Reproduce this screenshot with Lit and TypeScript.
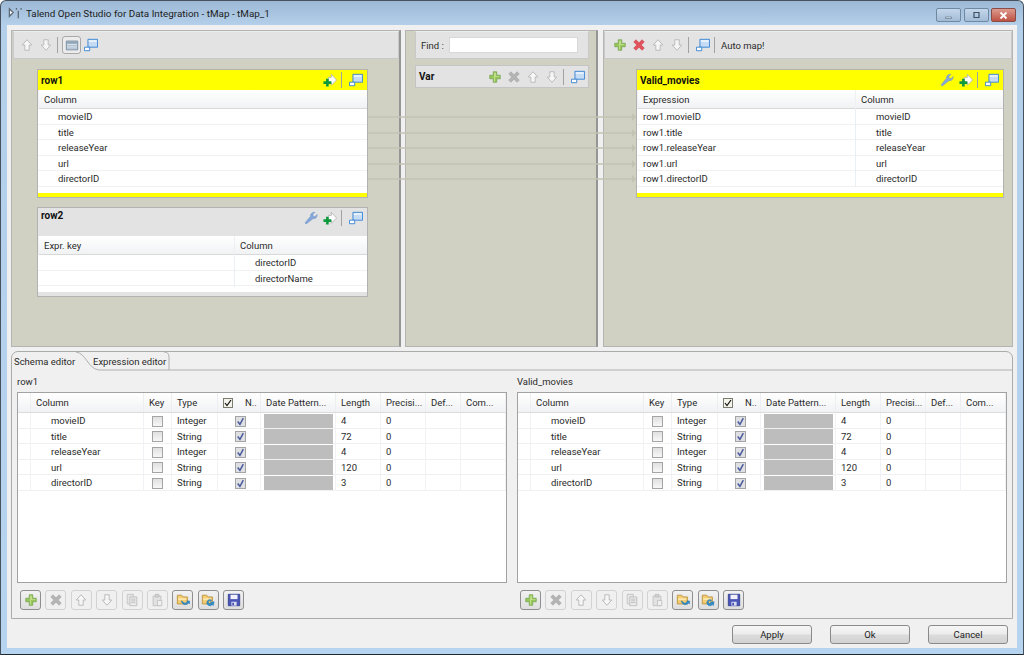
import { LitElement, css, html, svg } from 'lit';
import { customElement } from 'lit/decorators.js';

const ICONS: Record<string, unknown> = {
  plus: svg`<path d="M6 2h4v4h4v4h-4v4H6v-4H2V6h4z" fill="#98c85a" stroke="#6f9f4a" stroke-width=".8"/><path d="M7 3h2v4h4v1H8v5H7z" fill="#c3e08e"/>`,
  delOff: svg`<path d="M4.500 2 8 5.500 11.500 2 14 4.500 10.500 8l3.500 3.500-2.500 2.500L8 10.500 4.500 14 2 11.500 5.500 8 2 4.500z" fill="#b4b4b4" stroke="#a4a4a4" stroke-width=".7"/>`,
  del: svg`<path d="M4.500 2 8 5.500 11.500 2 14 4.500 10.500 8l3.500 3.500-2.500 2.500L8 10.500 4.500 14 2 11.500 5.500 8 2 4.500z" fill="#e2525c" stroke="#c8404a" stroke-width=".7"/>`,
  up: svg`<path d="M8 2l5.500 6H10.500v6h-5V8H2.500z" fill="#f6f6f6" stroke="#b9b9b9" stroke-width="1.100"/>`,
  down: svg`<path d="M8 14l5.500-6H10.500V2h-5v6H2.500z" fill="#f6f6f6" stroke="#b9b9b9" stroke-width="1.100"/>`,
  mon: svg`<path d="M4.500 1.500h11v9h-11z" fill="#c5dcf4" stroke="#2f7fd2"/><path d="M5.500 2.500h9v2h-9z" fill="#eaf3fc"/><path d="M.5 10.500h6v4h-6z" fill="#fff" stroke="#2f7fd2"/>`,
  table: svg`<path d="M1.500 3.500h13v10h-13z" fill="#e4ecf5" stroke="#6a7f94"/><path d="M2 6.500h12M2 9h12M2 11.500h12" stroke="#8fa3b6"/><path d="M2 4h12v2H2z" fill="#8fa3b6"/>`,
  add: svg`<path d="M6 5h3.500V1.500L15.500 8l-6 6v-3.500H6z" fill="#fff" stroke="#b4b4b4"/><path d="M3.500 6.500h3v3h3v3h-3v3h-3v-3H.5v-3h3z" fill="#0c9a3c"/>`,
  wrench: svg`<path d="M3 14.500c-1 .5-2-.6-1.500-1.500l6-7C7 3.500 9.500 1 12.500 1.500L10 4l.5 2 2 .5L15 4c.4 3-2 5.500-4.500 4.500z" fill="#86a7da" stroke="#7294c6" stroke-width=".6"/>`,
  copy: svg`<path d="M2.500 1.500h7v11h-7z" fill="#e6e6e6" stroke="#c2c2c2"/><path d="M5.500 4.500h8v10h-8z" fill="#ececec" stroke="#bcbcbc"/><path d="M7 7h5M7 9h5M7 11h5" stroke="#bcbcbc"/>`,
  paste: svg`<path d="M3.500 3.500h9v11h-9z" fill="#e2e2e2" stroke="#c0c0c0"/><path d="M6 1.500h4v3H6z" fill="#d4d4d4" stroke="#bcbcbc"/><path d="M8.500 8.500h5v6h-5z" fill="#f0f0f0" stroke="#c0c0c0"/>`,
  foldIn: svg`<path d="M1.500 2.500h5l1.500 2h5v8h-11.500z" fill="#f4cd72" stroke="#b8913e"/><path d="M2.500 6h9v2h-9z" fill="#fbe6ad"/><path d="M7 9c2 3 4 3 6 1l-1-1h3.500v3.500l-1-1c-3 3-7 2.500-8.500-2.500z" fill="#2f8fcf" stroke="#1f6c9f" stroke-width=".5"/>`,
  foldOut: svg`<path d="M1.500 2.500h5l1.500 2h5v8h-11.500z" fill="#f4cd72" stroke="#b8913e"/><path d="M2.500 6h9v2h-9z" fill="#fbe6ad"/><path d="M12 8a3.500 3.500 0 1 0 1 5l1 1.500 1-4.500-4.500.5 1 1c-1 1-3 .8-3-1 0-1.500 2-2 3-1z" fill="#2f8fcf" stroke="#1f6c9f" stroke-width=".5"/>`,
  save: svg`<path d="M1.500 1.500h13v13h-13z" fill="#4a55b8" stroke="#34408f"/><path d="M4 2h8v5H4z" fill="#f2f2f8"/><path d="M5 10h6v4.500H5z" fill="#d8dcef"/><path d="M6 11h2v3H6z" fill="#4a55b8"/>`,
  talend: svg`<path d="M1.500 3l4 4-4 4zM9 2v2M11 5v8M14 2v2" stroke="#5d6b78" stroke-width="1.400" fill="#fff"/>`,
};

const icon = (name: string) =>
  html`<svg class="ico" viewBox="0 0 16 16">${ICONS[name]}</svg>`;

const SCHEMA = [
  ['movieID', 'Integer', '4'],
  ['title', 'String', '72'],
  ['releaseYear', 'Integer', '4'],
  ['url', 'String', '120'],
  ['directorID', 'String', '3'],
];

const LINK_YS = [87, 103, 118, 134, 149];

@customElement('app-root')
export class AppRoot extends LitElement {
  static styles = css`
    :host {
      display: block;
      width: 1024px;
      height: 655px;
      overflow: hidden;
      background: #fff;
      font-family: Roboto, 'Noto Sans', sans-serif;
      font-size: 9.500px;
      color: #2a2a2a;
    }
    .window {
      box-sizing: border-box;
      height: 655px;
      display: flex;
      flex-direction: column;
      padding: 0 6px 6px;
      border: 1px solid #46535e;
      border-bottom-color: #1f2a30;
      border-radius: 6px 6px 0 0;
      background: linear-gradient(#9db8d4 0, #b3cfea 24px, #b6d3f0 100%);
    }
    .titlebar {
      height: 24px;
      flex: none;
      display: flex;
      align-items: center;
      font-size: 9.900px;
      color: #1c1c1c;
    }
    .titlebar .ico {
      width: 15px;
      height: 15px;
      margin: 0 3px 0 1px;
    }
    .title {
      flex: 1;
    }
    .wincontrols {
      display: flex;
      gap: 2.500px;
      align-self: flex-start;
      margin: 7px 1px 0 0;
    }
    .wbtn {
      box-sizing: border-box;
      width: 25px;
      height: 14px;
      border: 1px solid #7089a3;
      border-radius: 2px;
      background: linear-gradient(#c4d7eb, #a3bcd6);
      display: flex;
      align-items: center;
      justify-content: center;
    }
    .wbtn.close {
      background: linear-gradient(#dc9a8e, #bd5344);
      border-color: #8a4c45;
    }
    .wbtn svg {
      width: 11px;
      height: 9px;
    }
    .body {
      flex: 1;
      display: flex;
      flex-direction: column;
      padding: 5px 4px 0;
      background: #f0f0f0;
    }
    .map {
      position: relative;
      height: 317px;
      flex: none;
      display: flex;
    }
    .links {
      position: absolute;
      left: 0;
      top: 0;
      width: 1002px;
      height: 317px;
      pointer-events: none;
    }
    .pane {
      box-sizing: border-box;
      height: 317px;
      border: 1px solid #b4b4b4;
      background: #d1d1c3;
    }
    .pane.left {
      width: 390px;
      margin-right: 4px;
      padding-left: 1px;
      border-right: 2px solid #959595;
    }
    .pane.mid {
      width: 193px;
      margin-right: 5px;
      padding-left: 9px;
      border-right: 2px solid #959595;
    }
    .pane.right {
      width: 410px;
    }
    .toolbar {
      box-sizing: border-box;
      height: 28px;
      display: flex;
      align-items: center;
      background: #e3e3e3;
      border: 1px solid #c9c9c9;
      border-top-color: #ececec;
    }
    .left .toolbar {
      padding-left: 3px;
    }
    .right .toolbar {
      padding-left: 5px;
    }
    .ico {
      width: 14px;
      height: 14px;
      display: block;
    }
    .tool {
      width: 19px;
      height: 16px;
      flex: none;
      display: flex;
      align-items: center;
      justify-content: center;
    }
    .tool.on {
      box-sizing: border-box;
      height: 18px;
      border: 1px solid #a9a9a9;
      border-radius: 3px;
      background: #ececec;
    }
    .sep {
      width: 1px;
      height: 16px;
      flex: none;
      margin: 0 4px 0 2px;
      background: #a2a2a2;
    }
    .automap {
      margin-left: 2px;
    }
    .find {
      box-sizing: border-box;
      width: 174px;
      gap: 5px;
      padding-left: 5px;
    }
    .find input {
      box-sizing: border-box;
      width: 129px;
      height: 16px;
      border: 1px solid #d8d8d8;
      background: #fff;
    }
    .var {
      box-sizing: border-box;
      width: 174px;
      height: 23px;
      margin-top: 6px;
      display: flex;
      align-items: center;
      padding: 0 1px 0 3px;
      background: #e3e3e3;
      border: 1px solid #c4c4c4;
    }
    .var .name,
    .card .name {
      flex: 1;
      font-size: 10px;
      font-weight: 700;
      color: #111;
    }
    .card {
      border: 1px solid #b2b2b2;
      background: #fff;
    }
    .left .card {
      width: 329px;
      margin-left: 24px;
    }
    .right .card {
      width: 366px;
      margin-left: 32px;
    }
    .card.first {
      margin-top: 10px;
    }
    .card.second {
      margin-top: 9px;
    }
    .head {
      height: 20px;
      display: flex;
      align-items: center;
      padding: 0 2px 0 3px;
      background: #ffff00;
    }
    .second .head {
      height: 28px;
      align-items: flex-start;
      padding-top: 2px;
      box-sizing: border-box;
      background: #e3e3e3;
    }
    .grid-one,
    .grid-expr,
    .grid-key {
      display: grid;
    }
    .grid-one {
      grid-template-columns: 1fr;
    }
    .grid-expr {
      grid-template-columns: 218px 1fr;
    }
    .grid-key {
      grid-template-columns: 196px 1fr;
    }
    .th {
      height: 19px;
      box-sizing: border-box;
      align-items: center;
      background: linear-gradient(#fff, #f1f2f4);
      border-bottom: 1px solid #d9d9d9;
    }
    .th > div {
      padding: 1px 0 0 5px;
      line-height: 18px;
      border-left: 1px solid #eef0f3;
    }
    .tr {
      height: 15.500px;
      box-sizing: border-box;
      border-bottom: 1px solid #f1f1f1;
      line-height: 16px;
    }
    .tr > div {
      padding-left: 6px;
      min-width: 0;
    }
    .tr > .val {
      padding-left: 20px;
      border-left: 1px solid #eaeff6;
    }
    .grid-one .val {
      border-left: 0;
    }
    .foot {
      height: 4px;
      margin-top: 6.500px;
      background: #ffff00;
    }
    .second .foot {
      margin-top: 6px;
      background: #e3e3e3;
    }
    .folder {
      box-sizing: border-box;
      height: 268px;
      flex: none;
      margin-top: 4px;
      display: flex;
      flex-direction: column;
      border: 1px solid #ababab;
      border-radius: 7px 7px 0 0;
    }
    .tabs {
      position: relative;
      height: 19px;
      flex: none;
      display: flex;
      align-items: center;
      padding-left: 2px;
    }
    .tabs svg {
      position: absolute;
      left: 0;
      top: 0;
      width: 1000px;
      height: 19px;
    }
    .tab {
      position: relative;
      width: 79px;
      white-space: nowrap;
    }
    .editors {
      flex: 1;
      display: flex;
      gap: 10px;
      padding: 3px 5px 0;
    }
    .editor {
      width: 490px;
    }
    .label {
      height: 18px;
      line-height: 16px;
    }
    .schema {
      box-sizing: border-box;
      height: 191px;
      border: 1px solid #a2a2a2;
      background: #fff;
    }
    .cols {
      display: grid;
      grid-template-columns: 13px 113px 28px 46px 43px 75px 45px 45px 35px 45px;
    }
    .cols.hd {
      height: 20px;
      box-sizing: border-box;
      background: linear-gradient(#fff, #f1f2f4);
      border-bottom: 1px solid #dcdcdc;
      line-height: 21px;
    }
    .cols.hd > div {
      padding-left: 5px;
      border-right: 1px solid #eceef1;
      white-space: nowrap;
      overflow: hidden;
      display: flex;
      align-items: center;
      gap: 12px;
    }
    .cols.rw {
      height: 15.500px;
      box-sizing: border-box;
      border-bottom: 1px solid #f0f0f0;
      line-height: 16px;
    }
    .cols.rw > div {
      padding-left: 5px;
      border-right: 1px solid #f0f2f6;
      display: flex;
      align-items: center;
    }
    .cols.rw > .name {
      padding-left: 20px;
    }
    .cols.rw > .center {
      padding-left: 0;
      justify-content: center;
    }
    .cols.rw > .locked-cell {
      padding-left: 3px;
    }
    .cols.rw > .grey {
      padding: 0 2px 0 3px;
    }
    .grey span {
      flex: 1;
      height: 14.500px;
      background: #bdbdbd;
    }
    .chk {
      box-sizing: border-box;
      width: 11px;
      height: 11px;
      flex: none;
      border: 1px solid #a4a4a4;
      background: linear-gradient(#e0e0e0, #f7f7f7);
    }
    .chk.locked {
      background: #dfe0e4;
    }
    .chk svg {
      display: block;
      width: 9px;
      height: 9px;
    }
    .chk.black {
      width: 10px;
      height: 10px;
      border-color: #7c7c70;
      background: #f4f4ec;
    }
    .chk.black svg {
      width: 8px;
      height: 8px;
    }
    .btns {
      display: flex;
      gap: 4.400px;
      margin: 7px 0 0 3px;
    }
    .btn {
      box-sizing: border-box;
      width: 21px;
      height: 20px;
      display: flex;
      align-items: center;
      justify-content: center;
      border: 1px solid #8f8f8f;
      border-radius: 3px;
      background: linear-gradient(#f2f2f2, #dedede);
    }
    .btn.off {
      border-color: #d2d2d2;
      background: #f0f0f0;
    }
    .actions {
      display: flex;
      justify-content: flex-end;
      gap: 18px;
      padding: 6px 5px 0 0;
    }
    .actions button {
      box-sizing: border-box;
      width: 80px;
      height: 19px;
      padding: 0;
      font: inherit;
      color: #1c1c1c;
      border: 1px solid #8a8a8a;
      border-radius: 3px;
      background: linear-gradient(#f6f6f6 0, #ececec 48%, #dcdcdc 52%, #d2d2d2 100%);
    }
  `;

  private tool(name: string, on = false) {
    return html`<div class="tool ${on ? 'on' : ''}">${icon(name)}</div>`;
  }

  private renderLinks() {
    return html`<svg class="links" viewBox="0 0 1002 317">
      ${LINK_YS.map(
        y => svg`<path d="M357 ${y}H621" stroke="#c3c3b4" stroke-width="1.500"/>
          <path d="M621 ${y - 4}l4 4-4 4z" fill="#c3c3b4"/>`
      )}
    </svg>`;
  }

  private renderRow1() {
    return html`<div class="card first">
      <div class="head">
        <span class="name">row1</span>
        ${this.tool('add')}
        <div class="sep"></div>
        ${this.tool('mon')}
      </div>
      <div class="grid-one th"><div>Column</div></div>
      ${SCHEMA.map(
        ([name]) =>
          html`<div class="grid-one tr"><div class="val">${name}</div></div>`
      )}
      <div class="foot"></div>
    </div>`;
  }

  private renderRow2() {
    return html`<div class="card second">
      <div class="head">
        <span class="name">row2</span>
        ${this.tool('wrench')} ${this.tool('add')}
        <div class="sep"></div>
        ${this.tool('mon')}
      </div>
      <div class="grid-key th">
        <div>Expr. key</div>
        <div>Column</div>
      </div>
      ${['directorID', 'directorName'].map(
        name =>
          html`<div class="grid-key tr">
            <div></div>
            <div class="val">${name}</div>
          </div>`
      )}
      <div class="foot"></div>
    </div>`;
  }

  private renderOutput() {
    return html`<div class="card first">
      <div class="head">
        <span class="name">Valid_movies</span>
        ${this.tool('wrench')} ${this.tool('add')}
        <div class="sep"></div>
        ${this.tool('mon')}
      </div>
      <div class="grid-expr th">
        <div>Expression</div>
        <div>Column</div>
      </div>
      ${SCHEMA.map(
        ([name]) =>
          html`<div class="grid-expr tr">
            <div>row1.${name}</div>
            <div class="val">${name}</div>
          </div>`
      )}
      <div class="foot"></div>
    </div>`;
  }

  private renderSchema(title: string) {
    const tick = html`<svg viewBox="0 0 8 8">
      <path d="M1.500 4l2 2.500L6.500 1" fill="none" stroke="#4a5a9c" stroke-width="1.300"/>
    </svg>`;
    const tools: [string, boolean][] = [
      ['plus', true],
      ['delOff', false],
      ['up', false],
      ['down', false],
      ['copy', false],
      ['paste', false],
      ['foldIn', true],
      ['foldOut', true],
      ['save', true],
    ];
    return html`<div class="editor">
      <div class="label">${title}</div>
      <div class="schema">
        <div class="cols hd">
          <div></div>
          <div>Column</div>
          <div>Key</div>
          <div>Type</div>
          <div>
            <span class="chk black"
              ><svg viewBox="0 0 8 8">
                <path d="M1 4l2 2.500L7 1" fill="none" stroke="#111" stroke-width="1.200"/></svg
            ></span>
            <span>N..</span>
          </div>
          <div>Date Pattern...</div>
          <div>Length</div>
          <div>Precisi...</div>
          <div>Def...</div>
          <div>Com...</div>
        </div>
        ${SCHEMA.map(
          ([name, type, len]) => html`<div class="cols rw">
            <div></div>
            <div class="name">${name}</div>
            <div class="center"><span class="chk"></span></div>
            <div>${type}</div>
            <div class="center locked-cell"><span class="chk locked">${tick}</span></div>
            <div class="grey"><span></span></div>
            <div>${len}</div>
            <div>0</div>
            <div></div>
            <div></div>
          </div>`
        )}
      </div>
      <div class="btns">
        ${tools.map(
          ([name, enabled]) =>
            html`<div class="btn ${enabled ? '' : 'off'}">${icon(name)}</div>`
        )}
      </div>
    </div>`;
  }

  render() {
    return html`<div class="window">
      <div class="titlebar">
        ${icon('talend')}
        <span class="title">Talend Open Studio for Data Integration - tMap - tMap_1</span>
        <div class="wincontrols">
          <div class="wbtn">
            <svg viewBox="0 0 11 9"><path d="M2.500 6h6v1.500h-6z" fill="#e8eef5" stroke="#50657a" stroke-width=".6"/></svg>
          </div>
          <div class="wbtn">
            <svg viewBox="0 0 11 9"><path d="M3 1.500h5v5H3z" fill="none" stroke="#3f5264" stroke-width="1.200"/></svg>
          </div>
          <div class="wbtn close">
            <svg viewBox="0 0 11 9"><path d="M2.500 1.500l6 6M8.500 1.500l-6 6" stroke="#fff" stroke-width="1.800"/></svg>
          </div>
        </div>
      </div>
      <div class="body">
        <div class="map">
          <div class="pane left">
            <div class="toolbar">
              ${this.tool('up')} ${this.tool('down')}
              <div class="sep"></div>
              ${this.tool('table', true)} ${this.tool('mon')}
            </div>
            ${this.renderRow1()} ${this.renderRow2()}
          </div>
          <div class="pane mid">
            <div class="toolbar find">
              <span>Find :</span>
              <input type="text" />
            </div>
            <div class="var">
              <span class="name">Var</span>
              ${this.tool('plus')} ${this.tool('delOff')} ${this.tool('up')}
              ${this.tool('down')}
              <div class="sep"></div>
              ${this.tool('mon')}
            </div>
          </div>
          <div class="pane right">
            <div class="toolbar">
              ${this.tool('plus')} ${this.tool('del')} ${this.tool('up')}
              ${this.tool('down')}
              <div class="sep"></div>
              ${this.tool('mon')}
              <div class="sep"></div>
              <span class="automap">Auto map!</span>
            </div>
            ${this.renderOutput()}
          </div>
          ${this.renderLinks()}
        </div>
        <div class="folder">
          <div class="tabs">
            <svg viewBox="0 0 1000 19">
              <path d="M64 0C74 1 76 17 87 18H1000M152 0q5 0 5 5v13" fill="none" stroke="#b0b0b0"/>
            </svg>
            <span class="tab">Schema editor</span>
            <span class="tab">Expression editor</span>
          </div>
          <div class="editors">
            ${this.renderSchema('row1')} ${this.renderSchema('Valid_movies')}
          </div>
        </div>
        <div class="actions">
          <button>Apply</button>
          <button>Ok</button>
          <button>Cancel</button>
        </div>
      </div>
    </div>`;
  }
}
